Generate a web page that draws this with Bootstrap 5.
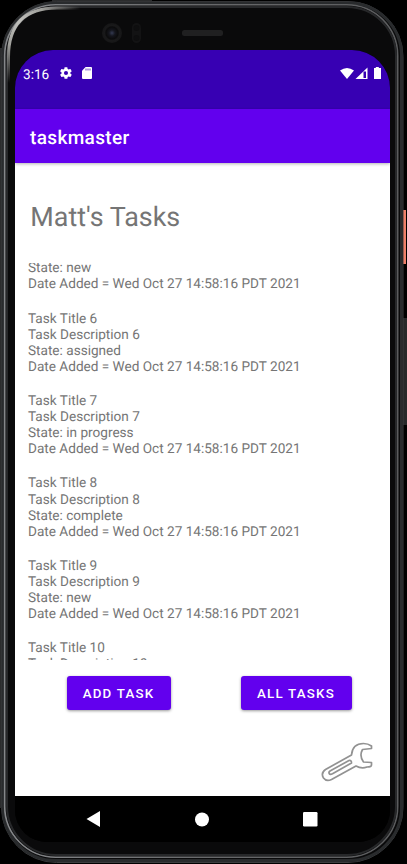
<!DOCTYPE html>
<html lang="en">
<head>
<meta charset="utf-8">
<meta name="viewport" content="width=device-width, initial-scale=1">
<title>taskmaster</title>
<link href="https://cdn.jsdelivr.net/npm/bootstrap@5.3.0/dist/css/bootstrap.min.css" rel="stylesheet">
<style>
  body { background:#000; font-family:Roboto,"Liberation Sans",sans-serif; width:407px; height:864px; text-rendering:geometricPrecision; }
  .device { width:407px; height:864px; padding:50px 17px 22px 15px; }
  .device-shell { inset:0; }
  .screen { border-radius:38px 38px 32px 32px; background:#000; }
  .status { height:59px; background:#3700b3; padding:15px 7px 0 8px; color:#fff; }
  .clock { font-size:13.6px; line-height:20px; width:36px; }
  .status svg { margin-top:1px; }
  .status .sd { margin:2px 0 0 9px; }
  .appbar { height:54px; background:#6200ee; padding:0 15px; box-shadow:0 1px 3px rgba(0,0,0,.3); }
  .brand { font-size:19px; letter-spacing:.35px; line-height:24px; padding-top:3px; }
  .content { color:#757575; background:#fff; }
  .heading { font-size:26.9px; line-height:32px; margin:38px 0 0 15.3px; font-weight:400; }
  .tasks { height:397px; margin-top:30px; padding-left:13px; }
  .task { height:82.35px; flex:none; font-size:13.6px; line-height:16.1px; white-space:nowrap; }
  .task:first-child { margin-top:-2.9px; height:50.7px; }
  .actions { margin-top:16px; padding:0 38px 0 52px; }
  .btn-task { --bs-btn-bg:#6200ee; --bs-btn-color:#fff; --bs-btn-border-radius:3px; --bs-btn-border-width:0; --bs-btn-padding-x:0; --bs-btn-padding-y:0; height:34px; padding:1px 1px 0 0; font-size:13.3px; font-weight:500; letter-spacing:1.2px; box-shadow:0 1px 3px rgba(0,0,0,.4); }
  .w-add { width:104px; } .w-all { width:111px; }
  .wrench { margin:29px 16px 0 auto; }
  .navkeys { height:46px; background:#000; padding:0 72px 0 71px; }
</style>
</head>
<body>
<div class="device position-relative d-flex flex-column">
  <svg class="device-shell position-absolute" width="407" height="864" viewBox="0 0 407 864" fill="none" aria-hidden="true">
    <defs>
      <linearGradient id="rim" x1="0" y1="0" x2="1" y2="0">
        <stop offset="0" stop-color="#85878a"/><stop offset=".5" stop-color="#68696b"/><stop offset="1" stop-color="#5b5c5e"/>
      </linearGradient>
      <radialGradient id="shine" gradientUnits="userSpaceOnUse" cx="20" cy="22" r="62">
        <stop offset="0" stop-color="#c0c0bc"/><stop offset=".4" stop-color="#a0a09c"/><stop offset="1" stop-color="#a0a09c" stop-opacity="0"/>
      </radialGradient>
      <radialGradient id="lens"><stop offset="0" stop-color="#343a52"/><stop offset=".3" stop-color="#15161d"/><stop offset=".6" stop-color="#0b0b0c"/><stop offset=".75" stop-color="#19191a"/><stop offset="1" stop-color="#161617"/></radialGradient>
    </defs>
    <path d="M0 48h2v760H0zM52 0h100v2H52z" fill="#2b2c2d"/>
    <rect x="403" y="210" width="3" height="54" fill="#f0806a"/>
    <rect x="403" y="318" width="4" height="107" fill="#27292a"/>
    <rect x="1.5" y="1.5" width="401.500" height="861" rx="55" fill="#0a0a0b" stroke="#3c3d3f"/>
    <rect x="3" y="3" width="398.500" height="857.500" rx="53" stroke="#292b2d" stroke-width="3"/>
    <rect x="4.700" y="4.700" width="393" height="852.500" rx="51" stroke="url(#rim)" stroke-width="1.600"/>
    <rect x="7" y="7" width="389" height="848" rx="49" stroke="#27282a" stroke-width="2"/>
    <path d="M8.500 90V57Q8.500 8 57 8H90" stroke="url(#shine)" stroke-width="3"/>
    <circle cx="112" cy="33" r="10" fill="url(#lens)"/>
    <rect x="132" y="23" width="9" height="20" rx="4.500" fill="#131314"/>
    <circle cx="136.500" cy="28" r="3" fill="#0e0e0f"/><circle cx="136.500" cy="38" r="3" fill="#0e0e0f"/>
    <rect x="182" y="30" width="41" height="6" rx="2.500" fill="#202021"/>
  </svg>

  <main class="screen position-relative d-flex flex-column flex-grow-1 overflow-hidden">
    <div class="status d-flex align-items-start flex-shrink-0">
      <span class="clock">3:16</span>
      <svg width="14" height="14" viewBox="0 0 24 24" fill="#fff"><path d="M19.400 13a7.800 7.800 0 0 0 0-2l2.100-1.600a.5.5 0 0 0 .1-.7l-2-3.400a.5.5 0 0 0-.6-.2l-2.500 1a7.300 7.300 0 0 0-1.700-1l-.4-2.600a.5.5 0 0 0-.5-.5h-4a.5.5 0 0 0-.5.5L9 5.100a7.300 7.300 0 0 0-1.700 1l-2.500-1a.5.5 0 0 0-.6.2l-2 3.400a.5.5 0 0 0 .1.700L4.500 11a7.800 7.800 0 0 0 0 2l-2.200 1.600a.5.500 0 0 0-.1.700l2 3.400c.1.200.4.300.6.200l2.500-1a7.300 7.300 0 0 0 1.700 1l.4 2.600c0 .300.2.500.5.500h4c.3 0 .5-.2.5-.5l.4-2.600a7.300 7.300 0 0 0 1.700-1l2.500 1c.2.100.5 0 .6-.2l2-3.400a.5.500 0 0 0-.1-.7zM12 15.500a3.500 3.500 0 1 1 0-7 3.500 3.500 0 0 1 0 7z"/></svg>
      <svg width="10" height="12" viewBox="0 0 10 12" class="sd"><path d="M3.600 0H9q1 0 1 1v10q0 1-1 1H1q-1 0-1-1V3.800z" fill="#fff"/><path d="M4 1.500v2M6 1.500v2M8 1.500v2" stroke="#3700b3" stroke-width=".8"/></svg>
      <svg width="43" height="14" viewBox="0 0 43 14" fill="#fff" class="ms-auto"><path d="M0 4.500Q7-.5 14 4.500L7 13z"/><path d="M27.500 1.500v11.500H15.500z"/><path d="M23.500 5.500h2.500v6.500h-2.500z" fill="#3700b3"/><path d="M35.800 1h3v1H41v10.500q0 .5-.5.500h-6q-.5 0-.5-.5V2h1.800z"/></svg>
    </div>
    <header class="appbar d-flex align-items-center flex-shrink-0 position-relative text-white"><span class="brand fw-medium">taskmaster</span></header>

    <section class="content d-flex flex-column flex-grow-1">
      <h1 class="heading">Matt's Tasks</h1>
      <div class="tasks d-flex flex-column overflow-hidden flex-shrink-0">
        <div class="task">State: new<br>Date Added = Wed Oct 27 14:58:16 PDT 2021</div>
        <div class="task">Task Title 6<br>Task Description 6<br>State: assigned<br>Date Added = Wed Oct 27 14:58:16 PDT 2021</div>
        <div class="task">Task Title 7<br>Task Description 7<br>State: in progress<br>Date Added = Wed Oct 27 14:58:16 PDT 2021</div>
        <div class="task">Task Title 8<br>Task Description 8<br>State: complete<br>Date Added = Wed Oct 27 14:58:16 PDT 2021</div>
        <div class="task">Task Title 9<br>Task Description 9<br>State: new<br>Date Added = Wed Oct 27 14:58:16 PDT 2021</div>
        <div class="task">Task Title 10<br>Task Description 10</div>
      </div>
      <div class="actions d-flex justify-content-between">
        <button type="button" class="btn btn-task w-add">ADD TASK</button>
        <button type="button" class="btn btn-task w-all">ALL TASKS</button>
      </div>
      <svg class="wrench flex-shrink-0" width="56" height="44" viewBox="0 0 56 44" fill="none" stroke="#929292" stroke-width="1.700" stroke-linejoin="round" stroke-linecap="round" role="img" aria-label="Settings"><path d="M33.500 16 7.500 30.500Q2.500 34 5.500 39Q8.500 43 13.500 40.500L38 27Q43.500 30 49 28Q53.500 28 53.500 26V23.500L45.500 23Q41 17 44.500 10.500L53.500 9.500V7Q50 4.500 45.500 4.500Q34.500 4.500 33.500 16Z"/><path d="M12 32 31 21.500Q33.500 21 33.500 24L14.500 34.800Q12 36 11.200 34.500Q10.500 33 12 32Z"/></svg>
    </section>

    <nav class="navkeys d-flex align-items-center justify-content-between flex-shrink-0">
      <svg width="14" height="16" viewBox="0 0 14 16"><path d="M14 0v16L.5 8z" fill="#fff"/></svg>
      <svg width="15" height="15" viewBox="0 0 15 15"><circle cx="8" cy="7.500" r="7" fill="#fff"/></svg>
      <svg width="15" height="15" viewBox="0 0 15 15"><rect width="14.500" height="14.500" rx="1.200" fill="#fff"/></svg>
    </nav>
  </main>
</div>
<script src="https://cdn.jsdelivr.net/npm/bootstrap@5.3.0/dist/js/bootstrap.bundle.min.js"></script>
</body>
</html>
